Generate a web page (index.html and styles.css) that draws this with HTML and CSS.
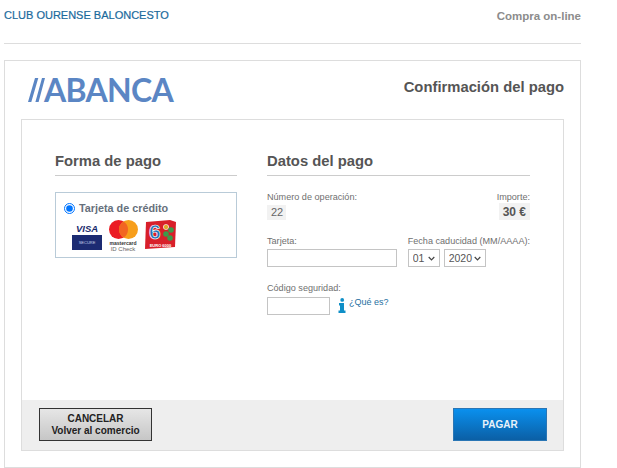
FILE: index.html
```html
<!DOCTYPE html>
<html lang="en">

<head>
    <meta charset="UTF-8">
    <meta name="viewport" content="width=device-width, initial-scale=1.0">
    <title>Confirmación del pago</title>
    <link rel="stylesheet" href="styles.css">
</head>

<body>
    <div class="page">
        <div class="top-bar">
            <span class="club">CLUB OURENSE BALONCESTO</span>
            <span class="shop">Compra on-line</span>
        </div>

        <div class="outer">
            <div class="brand-row">
                <div class="logo">
                    <svg class="logo-bars" width="17" height="24" viewBox="0 0 17 24">
                        <path d="M7 0h3.3L3.3 24H0zM14 0h3L10.6 24H7.4z" fill="#5b86c4" />
                    </svg>
                    <span class="logo-text">ABANCA</span>
                </div>
                <h1>Confirmación del pago</h1>
            </div>

            <div class="panel">
                <div class="columns">
                    <div class="col-left">
                        <h2>Forma de pago</h2>
                        <div class="method">
                            <label class="method-label">
                                <input type="radio" name="method" checked>
                                Tarjeta de crédito
                            </label>
                            <div class="cards">
                                <div class="visa">
                                    <span class="visa-name">VISA</span>
                                    <span class="visa-secure">SECURE</span>
                                </div>
                                <div class="mc">
                                    <svg width="29" height="19" viewBox="0 0 29 19">
                                        <circle cx="9.5" cy="9.5" r="9.5" fill="#eb1c24" />
                                        <circle cx="19.5" cy="9.5" r="9.5" fill="#f79e1b" />
                                        <path d="M14.5 1.4a9.5 9.5 0 0 1 0 16.2a9.5 9.5 0 0 1 0-16.2z" fill="#f26522" />
                                    </svg>
                                    <span class="mc-name">mastercard</span>
                                    <span class="mc-check">ID Check</span>
                                </div>
                                <div class="euro6000">
                                    <svg width="31" height="29" viewBox="0 0 31 29">
                                        <path d="M1 2L25 0L31 2L30 27L0 29z" fill="#d81f2a" />
                                        <circle cx="21" cy="7" r="2.8" fill="#fff" />
                                        <circle cx="26" cy="10" r="2.8" fill="#3c9a4b" />
                                        <circle cx="21" cy="14" r="2.8" fill="#3c9a4b" />
                                        <circle cx="25" cy="18" r="2.8" fill="#3c9a4b" />
                                        <circle cx="21" cy="7" r="2.2" fill="#e0a72a" />
                                    </svg>
                                    <span class="euro-six">6</span>
                                    <span class="euro-name">EURO 6000</span>
                                </div>
                            </div>
                        </div>
                    </div>

                    <div class="col-right">
                        <h2>Datos del pago</h2>
                        <div class="row row-info">
                            <div class="field">
                                <span class="lbl">Número de operación:</span>
                                <span class="value">22</span>
                            </div>
                            <div class="field field-end">
                                <span class="lbl">Importe:</span>
                                <span class="value-amount">30 €</span>
                            </div>
                        </div>
                        <div class="row row-card">
                            <div class="field">
                                <label class="lbl" for="card">Tarjeta:</label>
                                <input class="txt txt-card" type="text" id="card">
                            </div>
                            <div class="field">
                                <span class="lbl">Fecha caducidad (MM/AAAA):</span>
                                <div class="selects">
                                    <select class="sel sel-month">
                                        <option>01</option>
                                    </select>
                                    <select class="sel sel-year">
                                        <option>2020</option>
                                    </select>
                                </div>
                            </div>
                        </div>
                        <div class="field">
                            <label class="lbl" for="cvv">Código seguridad:</label>
                            <div class="cvv-row">
                                <input class="txt txt-cvv" type="text" id="cvv">
                                <svg class="info" width="8" height="15" viewBox="0 0 8 15">
                                    <circle cx="4.2" cy="1.9" r="1.9" fill="#0f8fc7" />
                                    <path d="M1 5h5v7.5h1.5V15H0.5v-2.5H2V7.5H1z" fill="#0f8fc7" />
                                </svg>
                                <a class="what" href="#">¿Qué es?</a>
                            </div>
                        </div>
                    </div>
                </div>

                <div class="actions">
                    <button class="btn-cancel">CANCELAR<br>Volver al comercio</button>
                    <button class="btn-pay">PAGAR</button>
                </div>
            </div>
        </div>
    </div>
</body>

</html>
```

FILE: styles.css
```css
body {
    margin: 0;
    font-family: "Liberation Sans", Arial, sans-serif;
    background-color: #fff;
    color: #555;
}

.page {
    width: 577px;
    margin-left: 4px;
}

.top-bar {
    display: flex;
    justify-content: space-between;
    height: 43px;
    border-bottom: 1px solid #ddd;
    margin-bottom: 16px;
}

.club {
    margin-top: 9px;
    font-size: 11px;
    line-height: 13px;
    -webkit-text-stroke: 0.2px #1a6a9c;
    color: #1a6a9c;
}

.shop {
    margin-top: 9px;
    font-size: 11.5px;
    line-height: 14px;
    font-weight: bold;
    color: #8c8c8c;
}

.outer {
    box-sizing: border-box;
    height: 408px;
    padding: 0 16px 16px;
    border: 1px solid #ddd;
}

.brand-row {
    display: flex;
    justify-content: space-between;
    align-items: flex-start;
    height: 58px;
    padding-left: 7px;
}

.logo {
    display: flex;
    align-items: center;
    margin-top: 17px;
    height: 24px;
}

.logo-text {
    margin-left: -1px;
    font-family: Lato, "Liberation Sans", sans-serif;
    font-size: 32px;
    line-height: 24px;
    font-weight: 700;
    letter-spacing: -0.7px;
    color: #5b86c4;
}

h1 {
    margin: 18px 0 0;
    font-size: 14.8px;
    line-height: 17px;
    color: #555;
}

.panel {
    box-sizing: border-box;
    height: 332px;
    display: flex;
    flex-direction: column;
    justify-content: space-between;
    border: 1px solid #ddd;
}

.columns {
    display: flex;
    padding: 33px 33px 0;
    gap: 30px;
}

h2 {
    margin: 0;
    height: 22px;
    font-size: 14.8px;
    line-height: 17px;
    border-bottom: 1px solid #ccc;
    color: #555;
}

.col-left {
    width: 182px;
}

.col-right {
    width: 263px;
}

.method {
    box-sizing: border-box;
    height: 66px;
    margin-top: 16px;
    padding: 8px 8px 0;
    border: 1px solid #b9cbd8;
}

.method-label {
    display: flex;
    align-items: center;
    font-size: 10.8px;
    line-height: 14px;
    font-weight: bold;
    color: #66707c;
}

.method-label input {
    width: 11px;
    height: 11px;
    margin: 0 4px 0 0;
}

.cards {
    display: flex;
    gap: 6px;
    margin-top: 5px;
    padding-left: 8px;
}

.visa {
    display: flex;
    flex-direction: column;
    align-items: center;
    width: 30px;
    padding-top: 3px;
}

.visa-name {
    font-size: 9.5px;
    line-height: 11px;
    font-weight: bold;
    font-style: italic;
    color: #1a2a6c;
}

.visa-secure {
    width: 30px;
    height: 15px;
    margin-top: 1px;
    background-color: #1c2b72;
    color: #c9d2ea;
    font-size: 4px;
    line-height: 15px;
    text-align: center;
}

.mc {
    display: flex;
    flex-direction: column;
    align-items: center;
    width: 30px;
    height: 30px;
}

.mc svg {
    flex-shrink: 0;
}

.mc-name {
    font-size: 5px;
    line-height: 6px;
    font-weight: bold;
    margin-top: 1px;
    color: #333;
}

.mc-check {
    font-size: 6px;
    line-height: 6px;
    color: #666;
}

.euro6000 {
    position: relative;
    width: 31px;
    height: 29px;
    margin-left: 1px;
}

.euro-six {
    position: absolute;
    left: 4px;
    top: 2px;
    font-size: 21px;
    line-height: 20px;
    font-weight: bold;
    color: #1f6fb8;
    -webkit-text-stroke: 0.7px #fff;
}

.euro-name {
    position: absolute;
    left: 1px;
    bottom: 1px;
    width: 29px;
    font-size: 4px;
    line-height: 5px;
    font-weight: bold;
    text-align: center;
    color: #fff;
}

.row {
    display: flex;
    justify-content: space-between;
}

.row-info {
    margin-top: 16px;
}

.row-card {
    margin-top: 16px;
    margin-bottom: 16px;
}

.field {
    display: flex;
    flex-direction: column;
    align-items: flex-start;
}

.field-end {
    align-items: flex-end;
}

.lbl {
    font-size: 9.1px;
    line-height: 11px;
    color: #6f6f6f;
}

.value {
    margin-top: 2px;
    padding: 0 3px 0 4px;
    font-size: 11px;
    line-height: 15px;
    background-color: #f2f2f2;
    color: #666;
}

.value-amount {
    padding: 1px 4px 0;
    line-height: 16px;
    font-size: 12px;
    font-weight: bold;
    background-color: #f2f2f2;
    color: #555;
}

.txt {
    box-sizing: border-box;
    height: 18px;
    margin: 2px 0 0;
    padding: 0 3px;
    border: 1px solid #c4c4c4;
    background-color: #fff;
}

.txt-card {
    width: 130px;
}

.txt-cvv {
    width: 63px;
    margin-top: 3px;
}

.selects {
    display: flex;
    gap: 4px;
    margin-top: 2px;
}

.sel {
    box-sizing: border-box;
    height: 18px;
    padding: 0 0 0 4px;
    border: 1px solid #c4c4c4;
    appearance: none;
    background: #fff url("data:image/svg+xml,%3Csvg xmlns='http://www.w3.org/2000/svg' width='7' height='5'%3E%3Cpath d='M.7 1l2.8 2.8L6.3 1' fill='none' stroke='%23444' stroke-width='1.2'/%3E%3C/svg%3E") no-repeat right 4px center;
    font-family: "Liberation Sans", Arial, sans-serif;
    font-size: 10.5px;
    color: #555;
}

.sel-month {
    width: 32px;
}

.sel-year {
    width: 42px;
}

.cvv-row {
    display: flex;
    align-items: flex-start;
}

.info {
    margin: 4px 0 0 8px;
}

.what {
    margin: 1px 0 0 3px;
    font-size: 9px;
    line-height: 14px;
    color: #1f6f9f;
    text-decoration: none;
}

.actions {
    box-sizing: border-box;
    height: 50px;
    display: flex;
    justify-content: space-between;
    align-items: flex-start;
    padding: 8px 16px 0 17px;
    background-color: #eee;
}

.btn-cancel {
    width: 113px;
    height: 33px;
    padding: 1px 0 0;
    border: 1px solid #333;
    background: linear-gradient(#e6e6e6, #c6c6c6);
    color: #222;
    font-family: "Liberation Sans", Arial, sans-serif;
    font-size: 10px;
    line-height: 12px;
    font-weight: bold;
    cursor: pointer;
}

.btn-pay {
    width: 94px;
    height: 33px;
    padding: 0;
    border: 1px solid #2a76b5;
    background: linear-gradient(#0a90ee, #0b5fa5);
    color: #e8f2fa;
    font-family: "Liberation Sans", Arial, sans-serif;
    font-size: 10px;
    font-weight: bold;
    cursor: pointer;
}
```
